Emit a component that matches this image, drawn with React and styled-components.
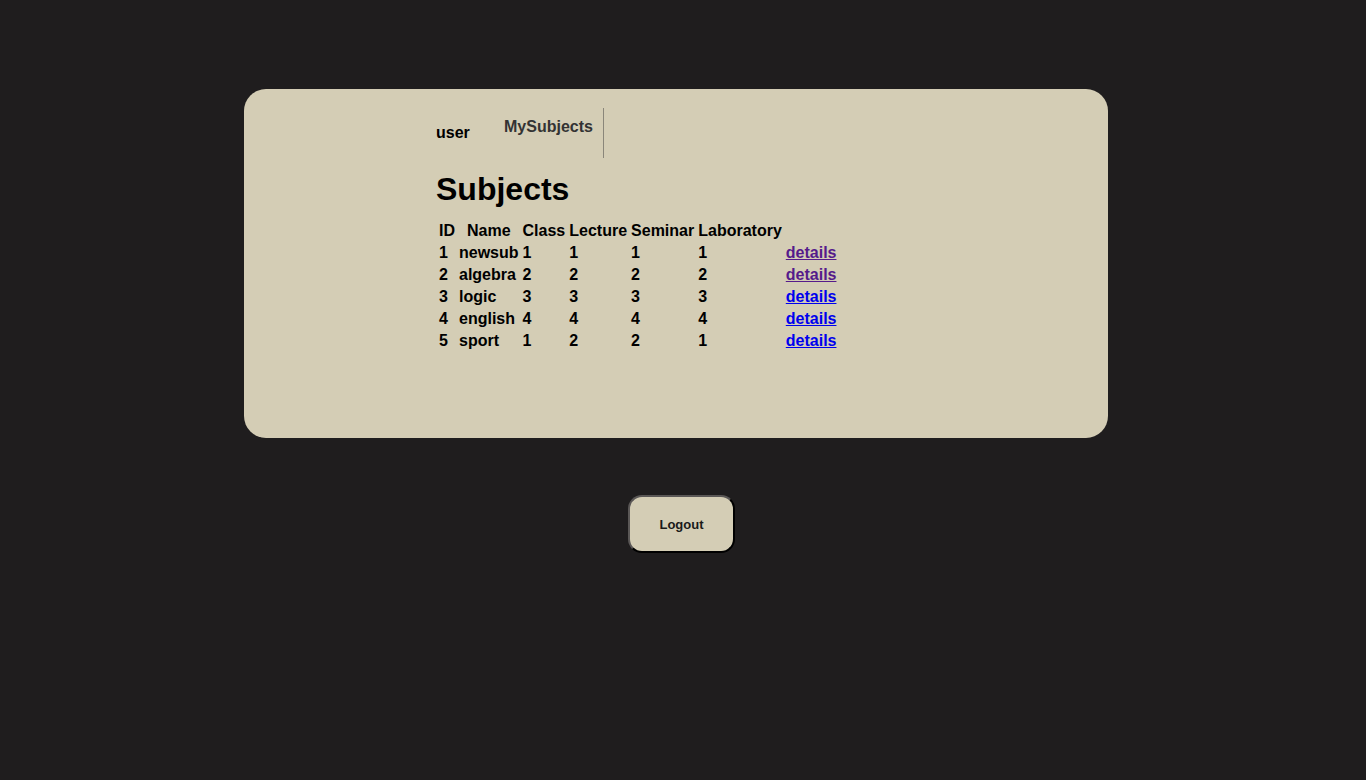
import React from "react";
import styled, { createGlobalStyle } from "styled-components";

const Global = createGlobalStyle`
  html, body { margin: 0; padding: 0; background: #1f1d1e; }
  body { font-family: "Liberation Sans", Arial, sans-serif; }
`;

const Page = styled.div`
  min-height: 780px;
  padding-top: 89px;
  box-sizing: border-box;
`;

const Card = styled.div`
  margin-left: 244px;
  width: 864px;
  height: 349px;
  box-sizing: border-box;
  background: #d4cdb5;
  border-radius: 22px;
  padding: 19px 0 0 192px;
`;

const Nav = styled.nav`
  display: flex;
  align-items: center;
  height: 50px;
`;

const User = styled.span`
  font-weight: bold;
  font-size: 16px;
  line-height: 18px;
  color: #000;
  margin-top: -1px;
  width: 68px;
`;

const NavLink = styled.span`
  align-self: stretch;
  font-weight: bold;
  font-size: 16px;
  line-height: 18px;
  color: #333;
  padding: 10px 10px 0 0;
  border-right: 1px solid #8a867a;
`;

const Title = styled.h1`
  margin: 13px 0 11px;
  font-size: 32px;
  line-height: 37px;
  font-weight: bold;
  color: #000;
`;

const Table = styled.table`
  border-spacing: 2px;
  font-size: 16px;
  font-weight: bold;
  color: #000;
`;

const Th = styled.th`
  padding: 1px;
  line-height: 18px;
  text-align: center;
`;

const Td = styled.td`
  padding: 1px;
  line-height: 18px;
  text-align: left;
`;

const Link = styled.a`
  color: ${(p) => (p.$visited ? "#551a8b" : "#0000ee")};
  text-decoration: underline;
  cursor: pointer;
`;

const Footer = styled.div`
  display: flex;
  justify-content: center;
  margin-top: 57px;
`;

const LogoutButton = styled.button`
  width: 107px;
  height: 58px;
  background: #d4cdb5;
  border: 2px solid;
  border-color: #5a5756 #000 #000 #5a5756;
  border-radius: 14px;
  font-family: "Liberation Sans", Arial, sans-serif;
  font-weight: bold;
  font-size: 13px;
  color: #1a1a1a;
  cursor: pointer;
  margin-left: -3px;
`;

const subjects = [
  { id: 1, name: "newsub", cls: 1, lec: 1, sem: 1, lab: 1, visited: true },
  { id: 2, name: "algebra", cls: 2, lec: 2, sem: 2, lab: 2, visited: true },
  { id: 3, name: "logic", cls: 3, lec: 3, sem: 3, lab: 3 },
  { id: 4, name: "english", cls: 4, lec: 4, sem: 4, lab: 4 },
  { id: 5, name: "sport", cls: 1, lec: 2, sem: 2, lab: 1 },
];

export default function App() {
  return (
    <Page>
      <Global />
      <Card>
        <Nav>
          <User>user</User>
          <NavLink>MySubjects</NavLink>
        </Nav>
        <Title>Subjects</Title>
        <Table>
          <thead>
            <tr>
              <Th>ID</Th>
              <Th>Name</Th>
              <Th>Class</Th>
              <Th>Lecture</Th>
              <Th>Seminar</Th>
              <Th>Laboratory</Th>
              <Th></Th>
            </tr>
          </thead>
          <tbody>
            {subjects.map((s) => (
              <tr key={s.id}>
                <Td>{s.id}</Td>
                <Td>{s.name}</Td>
                <Td>{s.cls}</Td>
                <Td>{s.lec}</Td>
                <Td>{s.sem}</Td>
                <Td>{s.lab}</Td>
                <Td>
                  <Link $visited={s.visited}>details</Link>
                </Td>
              </tr>
            ))}
          </tbody>
        </Table>
      </Card>
      <Footer>
        <LogoutButton>Logout</LogoutButton>
      </Footer>
    </Page>
  );
}
